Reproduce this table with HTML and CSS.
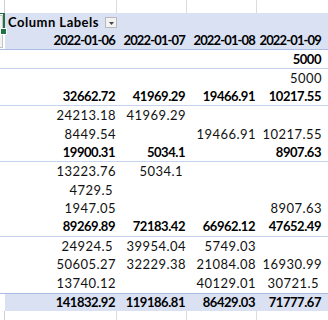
FILE: index.html
```html
<!DOCTYPE html>
<html lang="en">
  <head>
    <meta charset="UTF-8" />
    <title>Pivot Table</title>
    <link rel="stylesheet" href="styles.css">
  </head>
  <body>
    <div class="sheet">
      <div class="row grid top">
        <div class="c a"></div><div class="c"></div><div class="c"></div><div class="c"></div><div class="c"></div>
      </div>
      <div class="row head">
        <div class="c a sel"><span class="stub"></span><span class="handle"></span></div>
        <div class="c labels">
          <span>Column Labels</span>
          <span class="drop"><svg width="5" height="3" viewBox="0 0 5 3"><path d="M0 0h5L2.5 3z" fill="#444"/></svg></span>
        </div>
        <div class="c"></div><div class="c"></div><div class="c"></div>
      </div>
      <div class="row head dates line">
        <div class="c a"><span class="stub low"></span></div>
        <div class="c">2022-01-06</div><div class="c">2022-01-07</div><div class="c">2022-01-08</div><div class="c">2022-01-09</div>
      </div>

      <div class="row sub line">
        <div class="c a"></div><div class="c"></div><div class="c"></div><div class="c"></div><div class="c">5000</div>
      </div>
      <div class="row">
        <div class="c a"></div><div class="c"></div><div class="c"></div><div class="c"></div><div class="c">5000</div>
      </div>

      <div class="row sub line">
        <div class="c a"></div><div class="c">32662.72</div><div class="c">41969.29</div><div class="c">19466.91</div><div class="c">10217.55</div>
      </div>
      <div class="row">
        <div class="c a"></div><div class="c">24213.18</div><div class="c">41969.29</div><div class="c"></div><div class="c"></div>
      </div>
      <div class="row">
        <div class="c a"></div><div class="c">8449.54</div><div class="c"></div><div class="c">19466.91</div><div class="c">10217.55</div>
      </div>

      <div class="row sub line">
        <div class="c a"></div><div class="c">19900.31</div><div class="c">5034.1</div><div class="c"></div><div class="c">8907.63</div>
      </div>
      <div class="row">
        <div class="c a"></div><div class="c">13223.76</div><div class="c short">5034.1</div><div class="c"></div><div class="c"></div>
      </div>
      <div class="row">
        <div class="c a"></div><div class="c short">4729.5</div><div class="c"></div><div class="c"></div><div class="c"></div>
      </div>
      <div class="row">
        <div class="c a"></div><div class="c">1947.05</div><div class="c"></div><div class="c"></div><div class="c">8907.63</div>
      </div>

      <div class="row sub line">
        <div class="c a"></div><div class="c">89269.89</div><div class="c">72183.42</div><div class="c">66962.12</div><div class="c">47652.49</div>
      </div>
      <div class="row">
        <div class="c a"></div><div class="c short">24924.5</div><div class="c">39954.04</div><div class="c">5749.03</div><div class="c"></div>
      </div>
      <div class="row">
        <div class="c a"></div><div class="c">50605.27</div><div class="c">32229.38</div><div class="c">21084.08</div><div class="c">16930.99</div>
      </div>
      <div class="row">
        <div class="c a"></div><div class="c">13740.12</div><div class="c"></div><div class="c">40129.01</div><div class="c short">30721.5</div>
      </div>

      <div class="row total">
        <div class="c a"></div><div class="c">141832.92</div><div class="c">119186.81</div><div class="c">86429.03</div><div class="c">71777.67</div>
      </div>
      <div class="row grid bottom">
        <div class="c a"></div><div class="c"></div><div class="c"></div><div class="c"></div><div class="c"></div>
      </div>
    </div>
  </body>
</html>
```

FILE: styles.css
```css
body {
  margin: 0;
  background: white;
  font-family: Lato, "Liberation Sans", sans-serif;
  font-size: 13px;
  color: #111;
  overflow: hidden;
}
.sheet {
  width: 328px;
  height: 320px;
  overflow: hidden;
}
.row {
  display: grid;
  grid-template-columns: 5px 112px 70px 70px 72px;
  height: 18.65px;
  box-sizing: border-box;
  letter-spacing: 0.45px;
}
.c {
  display: flex;
  align-items: center;
  justify-content: flex-end;
  padding: 0 1px 1px 0;
  white-space: nowrap;
  box-sizing: border-box;
}
.c:nth-child(5) { padding-right: 7px; }
.c.short { padding-right: 4px; }
.c:nth-child(5).short { padding-right: 10px; }

.top { height: 13px; }
.bottom { height: 9px; }
.grid .c { border-right: 1px solid #dcdcdc; }
.grid .c.a { border-right-color: #d0d0d0; }

.head, .sub, .total {
  font-weight: 700;
  letter-spacing: -0.45px;
  color: #000;
}
.head .c, .sub .c, .total .c { padding-right: 2px; }
.head .c:nth-child(5), .sub .c:nth-child(5), .total .c:nth-child(5) { padding-right: 8px; }
.head { background: #d9e1f2; }
.head .c.a { background: white; }
.dates { letter-spacing: -0.85px; }
.line { border-bottom: 1px solid #c6d3ec; }
.head.line { border-bottom-color: #a9bde3; }
.total {
  background: #d9e1f2;
  border-top: 1px solid #a9bde3;
}
.total .c.a { background: white; }

.head .labels {
  justify-content: space-between;
  padding-left: 3px;
  padding-right: 0;
  letter-spacing: 0.5px;
}
.drop {
  width: 12px;
  height: 11px;
  margin-top: 2px;
  box-sizing: border-box;
  border: 1px solid #b9b9b9;
  background: #f3f3f3;
  display: flex;
  align-items: flex-end;
  justify-content: center;
  padding-bottom: 2px;
}
.drop svg { display: block; }

.head .sel {
  position: relative;
  border-top: 1px solid #217346;
  border-right: 2px solid #217346;
  justify-content: flex-start;
  padding: 0;
}
.stub {
  width: 3px;
  height: 15px;
  border: 1px solid #c4c4c4;
  border-left: none;
  background: #f2f2f2;
  box-sizing: border-box;
}
.stub.low { height: 14px; margin-top: 1px; }
.dates .c.a { justify-content: flex-start; padding: 0; }
.handle {
  position: absolute;
  right: -4px;
  bottom: -3px;
  width: 5px;
  height: 5px;
  background: #217346;
  border: 1px solid white;
  box-sizing: content-box;
}
```
